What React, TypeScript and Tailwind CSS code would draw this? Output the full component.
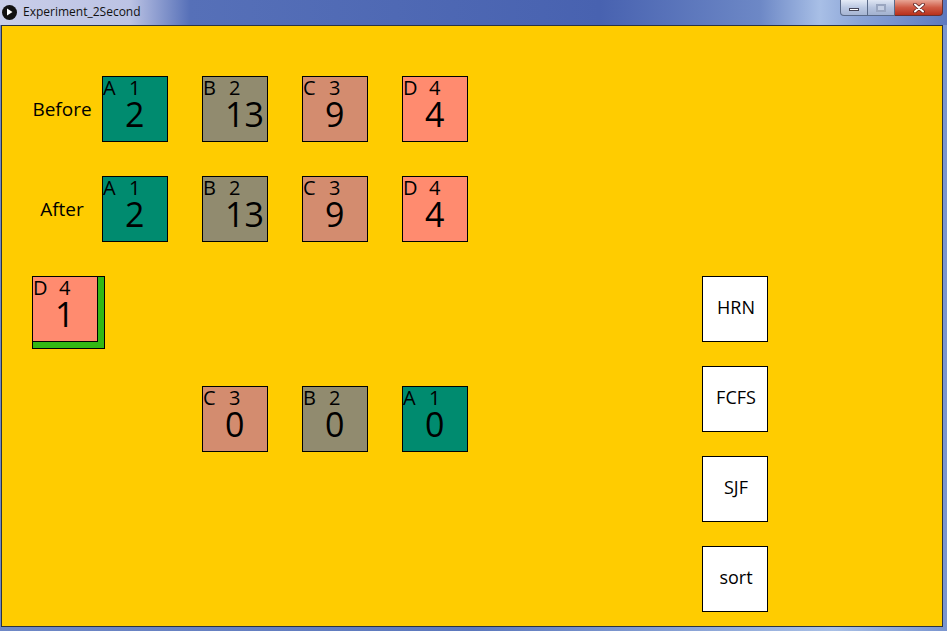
const topRows = [
  { label: "Before", cards: [
    { c: "A", id: 1, n: 2, bg: "bg-[#008b6f]" },
    { c: "B", id: 2, n: 13, bg: "bg-[#918b6f]" },
    { c: "C", id: 3, n: 9, bg: "bg-[#d38c6f]" },
    { c: "D", id: 4, n: 4, bg: "bg-[#ff8b6f]" },
  ] },
  { label: "After", cards: [
    { c: "A", id: 1, n: 2, bg: "bg-[#008b6f]" },
    { c: "B", id: 2, n: 13, bg: "bg-[#918b6f]" },
    { c: "C", id: 3, n: 9, bg: "bg-[#d38c6f]" },
    { c: "D", id: 4, n: 4, bg: "bg-[#ff8b6f]" },
  ] },
]

const doneRow = [
  { c: "C", id: 3, n: 0, bg: "bg-[#d38c6f]" },
  { c: "B", id: 2, n: 0, bg: "bg-[#918b6f]" },
  { c: "A", id: 1, n: 0, bg: "bg-[#008b6f]" },
]

const buttons = ["HRN", "FCFS", "SJF", "sort"]

type CardProps = { c: string; id: number; n: number; bg: string; className?: string }

function Card({ c, id, n, bg, className = "" }: CardProps) {
  return (
    <div className={`w-[66px] h-[66px] shrink-0 border border-black ${bg} ${className}`}>
      <div className="flex mt-[1px] h-[20px] text-[20px] leading-[20px]">
        <span className="w-[26px]">{c}</span>
        <span>{id}</span>
      </div>
      <div className="pl-[22px] text-[34px] leading-[33px]">{n}</div>
    </div>
  )
}

export default function App() {
  return (
    <div className="w-[947px] h-[631px] overflow-hidden bg-[linear-gradient(to_right,#6f88c6,#5c78bd_50%,#a9c0e6_88%,#7a95cf)] font-['Open_Sans',sans-serif] text-black">
      {/* title bar */}
      <div className="relative h-[25px] flex items-center bg-[linear-gradient(to_right,#c9cee9_0px,#bcc3e4_130px,#5670b8_190px,#4862b0_600px,#6d88c6_760px,#a8bfe6_820px,#8aa3d6_860px,#5d79bf_947px)]">
        <div className="ml-[2px] -mt-[1px] w-[15px] h-[15px] rounded-full bg-[#111] flex items-center justify-center">
          <svg width="7" height="8" viewBox="0 0 7 8">
            <path d="M1 0.5 L6.5 4 L1 7.5 Z" fill="#fff" />
          </svg>
        </div>
        <span className="ml-[6px] -mt-[1px] text-[12px] leading-none text-[#111]">Experiment_2Second</span>
        <div className="absolute right-[4px] top-0 flex h-[16px]">
          <div className="w-[28px] h-full rounded-bl-[4px] border border-t-0 border-[#5a6a88] bg-[linear-gradient(to_bottom,#e4ebf6,#bcc9e2_50%,#a6b5d3)] flex items-center justify-center">
            <div className="mt-[4px] w-[10px] h-[3px] bg-white border border-[#445]" />
          </div>
          <div className="w-[27px] h-full border border-l-0 border-t-0 border-[#5a6a88] bg-[linear-gradient(to_bottom,#dfe6f3,#b7c4de_50%,#a2b1cf)] flex items-center justify-center">
            <div className="w-[10px] h-[8px] border-2 border-[#9aa6c0] bg-[#c5cfe3]" />
          </div>
          <div className="w-[48px] h-full rounded-br-[4px] border border-l-0 border-t-0 border-[#6a3030] bg-[linear-gradient(to_bottom,#e8a595,#cf5a45_50%,#b8301c)] flex items-center justify-center">
            <svg width="12" height="10" viewBox="0 0 12 10">
              <path d="M2 1.5 L10 8.5 M10 1.5 L2 8.5" stroke="#5a2020" strokeWidth="3.6" strokeLinecap="round" />
              <path d="M2 1.5 L10 8.5 M10 1.5 L2 8.5" stroke="#fff" strokeWidth="2" strokeLinecap="round" />
            </svg>
          </div>
        </div>
      </div>

      {/* sketch canvas */}
      <div className="ml-[1px] w-[942px] h-[602px] border border-[#2b3340]">
        <div className="flex w-[940px] h-[600px] bg-[#ffcc00]">
          <div className="w-[700px] shrink-0 pt-[50px] pl-[30px]">
            {topRows.map((row, i) => (
              <div key={row.label} className={`flex items-center ${i > 0 ? "mt-[34px]" : ""}`}>
                <div className="w-[60px] mr-[10px] text-center text-[19px] leading-[24px]">{row.label}</div>
                <div className="flex gap-[34px]">
                  {row.cards.map((card) => (
                    <Card key={card.c} {...card} />
                  ))}
                </div>
              </div>
            ))}

            <div className="mt-[34px] w-[73px] h-[73px] border border-black bg-[#33b814]">
              <Card c="D" id={4} n={1} bg="bg-[#ff8b6f]" className="-mt-px -ml-px" />
            </div>

            <div className="mt-[37px] pl-[170px] flex gap-[34px]">
              {doneRow.map((card) => (
                <Card key={card.c} {...card} />
              ))}
            </div>
          </div>

          <div className="pt-[250px] flex flex-col gap-[24px]">
            {buttons.map((b) => (
              <div
                key={b}
                className="w-[66px] h-[66px] border border-black bg-white flex items-center justify-center pl-[2px] pb-[5px] text-[18px] leading-none"
              >
                {b}
              </div>
            ))}
          </div>
        </div>
      </div>
    </div>
  )
}
